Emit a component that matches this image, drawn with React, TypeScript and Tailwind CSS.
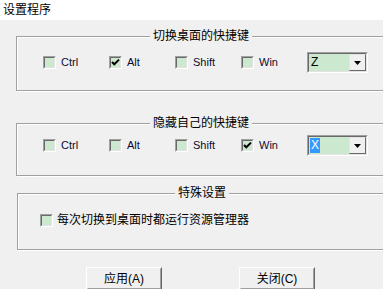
import React from "react";

const FONT = { fontFamily: '"Liberation Sans", "Noto Sans CJK SC", sans-serif' };

function Check({ checked }: { checked?: boolean }) {
  return (
    <div className="w-[13px] h-[13px] shrink-0 border border-t-[#a0a0a0] border-l-[#a0a0a0] border-b-white border-r-white">
      <div className="w-full h-full bg-[#cce8cf] border border-t-[#696969] border-l-[#696969] border-b-[#e3e3e3] border-r-[#e3e3e3] flex items-center justify-center">
        {checked && (
          <svg width="9" height="9" viewBox="0 0 9 9">
            <polyline points="1,4 3.3,6.3 8,1.6" fill="none" stroke="#000" strokeWidth="2" />
          </svg>
        )}
      </div>
    </div>
  );
}

function CheckItem({ label, checked }: { label: string; checked?: boolean }) {
  return (
    <div className="w-[66px] flex items-center gap-[5px]">
      <Check checked={checked} />
      <span className="text-[11px] leading-[13px] text-[#0a0a30]">{label}</span>
    </div>
  );
}

function Combo({ value, selected }: { value: string; selected?: boolean }) {
  return (
    <div className="w-[61px] h-[21px] border border-t-[#a0a0a0] border-l-[#a0a0a0] border-b-white border-r-white">
      <div className="w-full h-full bg-[#cce8cf] border border-t-[#696969] border-l-[#696969] border-b-[#e3e3e3] border-r-[#e3e3e3] flex items-center">
        <div className="flex-1 pl-[1px] flex items-center">
          <span
            className={
              "text-[12px] leading-[15px] px-[1px] " +
              (selected ? "bg-[#3399ff] text-white" : "text-black")
            }
          >
            {value}
          </span>
        </div>
        <div className="w-[17px] h-[17px] bg-[#f0f0f0] border border-t-[#e3e3e3] border-l-[#e3e3e3] border-b-[#696969] border-r-[#696969] flex items-center justify-center">
          <svg width="7" height="4" viewBox="0 0 7 4">
            <polygon points="0,0 7,0 3.5,4" fill="#000" />
          </svg>
        </div>
      </div>
    </div>
  );
}

function Group({
  title,
  className,
  children,
}: {
  title: string;
  className: string;
  children: React.ReactNode;
}) {
  return (
    <div
      className={
        "relative w-[370px] border border-[#a0a0a0] shadow-[inset_1px_1px_0_#ffffff,1px_1px_0_#ffffff] " +
        className
      }
    >
      <div className="absolute left-0 right-0 top-[-8px] flex justify-center">
        <span className="bg-[#f0f0f0] px-[3px] text-[12px] leading-[14px] text-black">{title}</span>
      </div>
      {children}
    </div>
  );
}

function Button({ label }: { label: string }) {
  return (
    <div className="w-[76px] h-[23px] border border-t-white border-l-white border-b-[#696969] border-r-[#696969]">
      <div className="w-full h-full bg-[#f0f0f0] border border-t-[#f0f0f0] border-l-[#f0f0f0] border-b-[#a0a0a0] border-r-[#a0a0a0] flex items-center justify-center">
        <span className="text-[12px] leading-[14px] text-black">{label}</span>
      </div>
    </div>
  );
}

export default function App() {
  return (
    <div className="w-[383px] h-[289px] overflow-hidden bg-[#f0f0f0]" style={FONT}>
      <div className="h-[20px] bg-white flex items-center pl-[3px]">
        <span className="text-[12px] leading-[14px] text-black">设置程序</span>
      </div>

      <Group title="切换桌面的快捷键" className="ml-[16px] mt-[16px] h-[55px] pt-[15px] pl-[26px]">
        <div className="flex items-center">
          <CheckItem label="Ctrl" />
          <CheckItem label="Alt" checked />
          <CheckItem label="Shift" />
          <CheckItem label="Win" />
          <Combo value="Z" />
        </div>
      </Group>

      <Group title="隐藏自己的快捷键" className="ml-[16px] mt-[32px] h-[53px] pt-[11px] pl-[26px]">
        <div className="flex items-center">
          <CheckItem label="Ctrl" />
          <CheckItem label="Alt" />
          <CheckItem label="Shift" />
          <CheckItem label="Win" checked />
          <Combo value="X" selected />
        </div>
      </Group>

      <Group title="特殊设置" className="ml-[17px] mt-[17px] h-[57px] pt-[19px] pl-[22px]">
        <div className="flex items-center gap-[4px]">
          <Check />
          <span className="text-[12px] leading-[14px] text-black">每次切换到桌面时都运行资源管理器</span>
        </div>
      </Group>

      <div className="mt-[17px] pl-[86px] flex gap-[77px]">
        <Button label="应用(A)" />
        <Button label="关闭(C)" />
      </div>
    </div>
  );
}
